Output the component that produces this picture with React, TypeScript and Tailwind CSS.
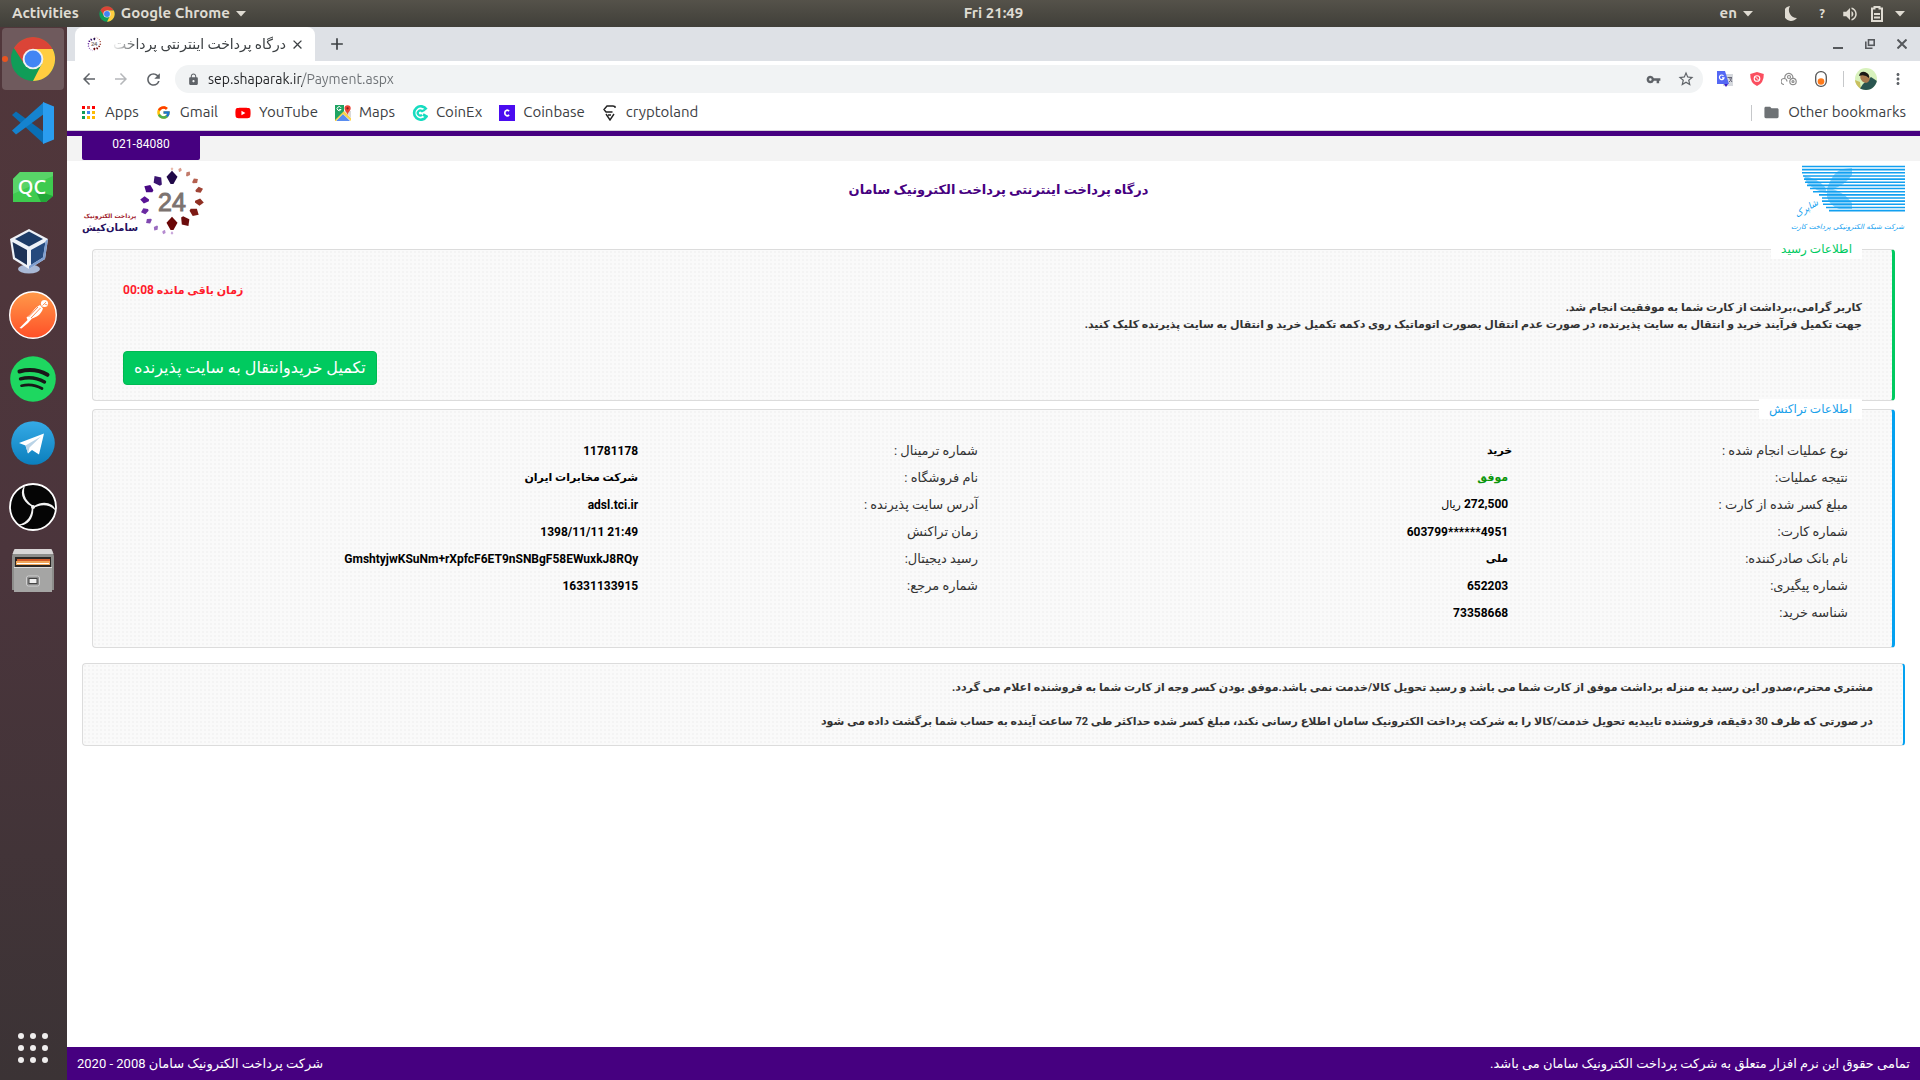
import React from "react";
import { MdStarBorder, MdVpnKey, MdLock, MdRefresh, MdArrowBack, MdArrowForward, MdClose, MdAdd, MdFolder, MdMoreVert, MdVolumeUp } from "react-icons/md";
import { FcGoogle } from "react-icons/fc";
import { FaYoutube } from "react-icons/fa";

const UI = "font-['Ubuntu','Noto_Sans','DejaVu_Sans',sans-serif]";

function ChromeLogo({ size }: { size: number }) {
  return (
    <svg width={size} height={size} viewBox="0 0 48 48" aria-hidden="true">
      <circle cx="24" cy="24" r="23" fill="#109d58" />
      <path d="M24 24 L4.1 12.5 A23 23 0 0 1 43.9 12.5 L44 13.5 H24 Z" fill="#db4437" />
      <path d="M24 13.5 H44.5 A23 23 0 0 1 24 47 L33.1 29.2 Z" fill="#ffcd40" />
      <path d="M4.1 12.5 L14.9 29.2 L24 24 V13.5 Z" fill="#db4437" />
      <circle cx="24" cy="24" r="10.8" fill="#f1f1f1" />
      <circle cx="24" cy="24" r="8.8" fill="#4285f4" />
    </svg>
  );
}

function VsCodeLogo() {
  return (
    <svg width="44" height="44" viewBox="0 0 44 44" aria-hidden="true">
      <path d="M1 14 L5 10.5 L33 31 V43 Z" fill="#0a6fb5" />
      <path d="M1 29.5 L5 33.5 L33 13 V1 Z" fill="#1583cf" />
      <path d="M32 1 L43 5.5 V38.500 L32 43 Z" fill="#2a9df0" />
    </svg>
  );
}

function QtCreatorLogo() {
  return (
    <svg width="40" height="30" viewBox="0 0 40 30" aria-hidden="true">
      <path d="M7 0 H40 V24 L33 30 H0 V7 Z" fill="#3ecb4f" />
      <path d="M7 0 H40 V4 L0 22 V7 Z" fill="#58d468" />
      <path d="M22 18 L40 24 L33 30 H28 Z" fill="#22a838" />
      <text x="19" y="22" textAnchor="middle" fontFamily="'Noto Sans', sans-serif" fontSize="20" fontWeight="500" fill="#fff">QC</text>
    </svg>
  );
}

function VirtualBoxLogo() {
  return (
    <svg className="mr-2" width="40" height="46" viewBox="0 0 40 46" aria-hidden="true">
      <ellipse cx="20" cy="41" rx="11" ry="4.500" fill="#a9b9d6" />
      <path d="M20 1 L39 11 L36 31 L20 41 L4 31 L1 11 Z" fill="#eef2f8" />
      <path d="M20 3.500 L34 11 L20 18.500 L6 11 Z" fill="#1d3c68" />
      <path d="M3.500 14 L18 22 V37 L6 29.500 Z" fill="#1b3157" />
      <path d="M36.500 14 L22 22 V37 L34 29.500 Z" fill="#254a7e" />
      <path d="M39 11 L36 31 L20 41 V38 L34 29.500 L36.500 13 Z" fill="#7f9fd0" />
    </svg>
  );
}

function PostmanLogo() {
  return (
    <svg width="48" height="48" viewBox="0 0 48 48" aria-hidden="true">
      <defs>
        <linearGradient id="postman" x1="0" y1="0" x2="0" y2="1">
          <stop offset="0" stopColor="#ff9a4a" />
          <stop offset="1" stopColor="#ff4f27" />
        </linearGradient>
      </defs>
      <circle cx="24" cy="24" r="23.300" fill="url(#postman)" stroke="#fff" strokeWidth="1.400" />
      <circle cx="35.500" cy="12.500" r="3.600" fill="#fff" />
      <path d="M31 14 L34 17.500 C32 24 27 26 23 27.500 L19 32 L12.500 37.500 L10.500 37 L18.500 29 L17.500 26.500 C22 24 25 17 31 14 Z" fill="#fff" />
      <path d="M29 16 L19.500 26 M31.500 17 L22 27" stroke="#ff7a3c" strokeWidth="0.900" />
      <path d="M33.500 14.500 L37 11 M35.500 13 L38.500 14" stroke="#ff8f50" strokeWidth="0.900" />
    </svg>
  );
}

function SpotifyLogo() {
  return (
    <svg width="46" height="46" viewBox="0 0 46 46" aria-hidden="true">
      <circle cx="23" cy="23" r="22.800" fill="#1ed760" />
      <g fill="none" stroke="#181818" strokeLinecap="round">
        <path d="M9.500 15.500 C19 13 29 14 37.500 18.800" strokeWidth="4" />
        <path d="M10.500 22.800 C19 20.600 27 21.600 34.500 26" strokeWidth="3.400" />
        <path d="M11.500 29.700 C18.500 28 25.500 28.700 32 32.500" strokeWidth="2.700" />
      </g>
    </svg>
  );
}

function TelegramLogo() {
  return (
    <svg width="44" height="44" viewBox="0 0 44 44" aria-hidden="true">
      <defs>
        <linearGradient id="telegram" x1="0" y1="0" x2="0" y2="1">
          <stop offset="0" stopColor="#35aae6" />
          <stop offset="1" stopColor="#0b7fbd" />
        </linearGradient>
      </defs>
      <circle cx="22" cy="22" r="21.800" fill="url(#telegram)" />
      <path d="M33 12.500 L8 22 L14.500 24.500 L17 32.500 L21 29 L28 33.500 Z" fill="#fff" />
      <path d="M14.500 24.500 L30 15.500 L18.500 26.500 L17 32.500 Z" fill="#b9d3e6" />
    </svg>
  );
}

function ObsLogo() {
  const arm = "M-8 -21.5 C-13.500 -17 -12 -6 -1.500 -0.500 L1.500 -0.500 C-5 -4 -11.500 -11 -8 -21.5 Z";
  return (
    <svg width="48" height="48" viewBox="-24 -24 48 48" aria-hidden="true">
      <circle r="23" fill="#050505" stroke="#fff" strokeWidth="1.800" />
      <g fill="#f4f4f4">
        <circle r="2" />
        <path d={arm} />
        <path d={arm} transform="rotate(120)" />
        <path d={arm} transform="rotate(240)" />
      </g>
    </svg>
  );
}

function FilesLogo() {
  return (
    <svg width="42" height="44" viewBox="0 0 42 44" aria-hidden="true">
      <path d="M2 1 H40 L42 7 V41 H0 V7 Z" fill="#8d8d8b" />
      <path d="M2.500 0 H39.500 L41.500 5 H0.500 Z" fill="#d8d5d6" />
      <rect x="3" y="8" width="36" height="12" fill="#2b2624" />
      <rect x="5" y="10" width="33" height="3" fill="#cf5b2b" />
      <rect x="4" y="12" width="34" height="4" fill="#f0a65a" />
      <rect x="5" y="14" width="32" height="1" fill="#fff" />
      <path d="M2 18 H40 V43 H2 Z" fill="#a5a5a4" />
      <path d="M2 18 H40 V19 H2 Z" fill="#dedede" />
      <rect x="14.500" y="27" width="13" height="10" rx="2" fill="#8c8c8c" stroke="#d0d0d0" />
      <rect x="17" y="29.500" width="8" height="5" fill="#eee" stroke="#444" />
    </svg>
  );
}

const dock = [
  { name: "Visual Studio Code", icon: <VsCodeLogo /> },
  { name: "Qt Creator", icon: <QtCreatorLogo /> },
  { name: "VirtualBox", icon: <VirtualBoxLogo /> },
  { name: "Postman", icon: <PostmanLogo /> },
  { name: "Spotify", icon: <SpotifyLogo /> },
  { name: "Telegram", icon: <TelegramLogo /> },
  { name: "OBS Studio", icon: <ObsLogo /> },
  { name: "Files", icon: <FilesLogo /> },
];

function Caret() {
  return (
    <svg width="10" height="6" viewBox="0 0 10 6" aria-hidden="true">
      <path d="M0 0 H10 L5 5.500 Z" fill="currentColor" />
    </svg>
  );
}

function SystemBar() {
  return (
    <header className={`${UI} grid h-[27px] shrink-0 grid-cols-[1fr_auto_1fr] items-center bg-linear-to-b from-[#55524a] to-[#403f39] pl-[67px] text-[15px] font-bold text-[#dfdbd2]`}>
      <div className="-ml-[55px] flex items-center gap-5">
        <button>Activities</button>
        <button className="flex items-center gap-1.5">
          <ChromeLogo size={16} />
          <span>Google Chrome</span>
          <Caret />
        </button>
      </div>
      <time>Fri 21:49</time>
      <div className="flex items-center justify-end pr-[15px]">
        <button className="mr-8 flex items-center gap-1.5">en <Caret /></button>
        <svg className="mr-5" width="12" height="15" viewBox="0 0 12 15" aria-label="Night light">
          <path d="M5 0 A7.500 7.500 0 1 0 12 12 A8 8 0 0 1 5 0 Z" fill="currentColor" />
        </svg>
        <span className="mr-3.5 w-2.5 text-center text-[13px]">?</span>
        <MdVolumeUp className="mr-3" size={18} aria-label="Volume" />
        <svg className="mr-3" width="12" height="16" viewBox="0 0 12 16" aria-label="Battery">
          <path d="M1 2.500 H3.500 V1 H8.500 V2.500 H11 V15 H1 Z" fill="none" stroke="currentColor" strokeWidth="2" />
          <path d="M3 8 H9 M3 11.500 H9" stroke="currentColor" strokeWidth="2" />
        </svg>
        <Caret />
      </div>
    </header>
  );
}

function Dock() {
  return (
    <nav aria-label="Dock" className="flex w-[67px] shrink-0 flex-col bg-linear-to-b from-[#51373b] via-[#4b353c] to-[#3b3335]">
      <button aria-label="Google Chrome" className="relative mx-0.5 my-px flex h-[62px] w-[62px] items-center justify-center rounded-sm bg-[#6f5a5d]">
        <span className="absolute left-0 h-1.5 w-1.5 rounded-full bg-[#e95420]" />
        <ChromeLogo size={46} />
      </button>
      {dock.map((d) => (
        <button key={d.name} aria-label={d.name} className="mr-px flex h-16 items-center justify-center">
          {d.icon}
        </button>
      ))}
      <button aria-label="Show Applications" className="mt-auto mr-px flex h-16 items-center justify-center">
        <span className="grid grid-cols-3 gap-1.5">
          {Array.from({ length: 9 }, (_, i) => (
            <span key={i} className="h-1.5 w-1.5 rounded-full bg-[#f0eeee]" />
          ))}
        </span>
      </button>
    </nav>
  );
}

const kites: [number, number, number, string, number][] = [
  [35, 5, 3, "#e8b8a8", 0], [43, 6, 4, "#d99a8a", 18], [51, 10, 5, "#c27a6a", 36], [58, 17, 6, "#b5604f", 54],
  [62, 26, 7, "#a04436", 72], [62, 38, 8, "#8f2f22", 95], [57, 48, 9, "#7d1a14", 120], [48, 57, 10, "#6c0c0c", 145],
  [35, 60, 12, "#6a0606", 0], [35, 69, 3, "#c8a4da", 180], [27, 68, 4, "#b58bd0", 198], [19, 64, 5, "#9a6bc0", 216],
  [12, 57, 6, "#8048b0", 234], [8, 47, 7, "#6a2aa2", 252], [8, 36, 8, "#5a1496", 276], [12, 25, 9, "#480884", 300],
  [21, 17, 10, "#3a1470", 325], [35, 14, 12, "#200848", 0],
];

function KiteRing({ size }: { size: number }) {
  return (
    <svg className="shrink-0" width={size} height={size} viewBox="1 0 74 74" aria-hidden="true">
      {kites.map(([x, y, s, c, a]) => (
        <path key={`${x}-${y}`} d="M0 -0.6 L0.46 -0.1 L0.12 0.5 H-0.12 L-0.46 -0.1 Z" fill={c} transform={`translate(${x} ${y}) rotate(${a}) scale(${s})`} />
      ))}
      <text x="35" y="47" textAnchor="middle" fontFamily="'Liberation Sans', sans-serif" fontSize="25" fill="#7c7370" stroke="#7c7370">24</text>
    </svg>
  );
}

function ShaparakLogo() {
  const rows = [0, 0, 0, 1, 2, 3, 5, 8, 11, 17, 20, 20, 21, 24, 27];
  return (
    <svg width="118" height="74" viewBox="-6 0 118 74" role="img" aria-label="شاپرک">
      <path d="M11 11 Q24 13 32 22 L34 28 Q22 26 14 18 Z M34 24 Q40 6 50 4 L59 3 V10 Q52 20 40 24 Q52 28 59 38 V44 H46 Q36 40 34 32 Z" fill="#3fb2f5" opacity="0.6" />
      {rows.map((x, i) => (
        <path key={i} d={`M${9 + x} ${1.5 + i * 3.150} H112`} stroke="#12a0f0" strokeWidth="1.600" />
      ))}
      <text x="15" y="46" direction="rtl" fontFamily="'DejaVu Sans', sans-serif" fontSize="9" fontStyle="italic" fill="#12a0f0" textAnchor="middle" transform="rotate(-32 15 46)">شاپرک</text>
      <text x="111" y="64" direction="rtl" fontFamily="'DejaVu Sans', sans-serif" fontSize="7" fontStyle="italic" fill="#12a0f0">شرکت شبکه الکترونیکی پرداخت کارت</text>
    </svg>
  );
}

function AppsIcon() {
  const colors = ["#ff0000", "#ea4335", "#ff0000", "#0f9d58", "#4285f4", "#fbbc05", "#0f9d58", "#fbbc05", "#ffb900"];
  return (
    <svg width="16" height="16" viewBox="0 0 16 16" aria-hidden="true">
      {colors.map((c, i) => (
        <rect key={i} x={1 + (i % 3) * 5} y={1 + Math.floor(i / 3) * 5} width="3" height="3" fill={c} />
      ))}
    </svg>
  );
}

function MapsIcon() {
  return (
    <svg width="16" height="16" viewBox="0 0 16 16" aria-hidden="true">
      <path d="M0 0 H9 L9 8 L0 16 Z" fill="#1fa463" />
      <path d="M1 16 L8 9 L15 16 Z" fill="#5a8df0" />
      <path d="M0 15 L9 6 L16 13 V16 L8 9 L1 16 H0 Z" fill="#fdd44b" />
      <path d="M9 6 L16 6 V13 Z" fill="#d9d9d9" />
      <path d="M12.500 10 C12 7 9.500 6 9.500 3.300 A3 3 0 0 1 15.700 3.300 C15.700 6 13 7 12.500 10 Z" fill="#ea4335" />
      <circle cx="12.600" cy="3.300" r="1.100" fill="#7b231e" />
      <path d="M6 2.800 A2 2 0 1 0 6 4.500 H4.200" fill="none" stroke="#fff" />
    </svg>
  );
}

function CoinExIcon() {
  return (
    <svg width="16" height="16" viewBox="0 0 16 16" aria-hidden="true" fill="none" stroke="#16dcc0" strokeWidth="2.600">
      <path d="M14.500 4.500 A6.700 6.700 0 1 0 14.500 11.500 L11 9.500" />
      <path d="M13 4.800 L10 6.200 A2.500 2.500 0 1 0 10 9.800" strokeWidth="2.200" />
    </svg>
  );
}

function CoinbaseIcon() {
  return (
    <svg width="16" height="16" viewBox="0 0 16 16" aria-hidden="true">
      <rect width="16" height="16" fill="#4a0cf0" />
      <path d="M10 6.300 C9 4.600 5.800 4.800 5.800 8 C5.800 11.200 9 11.400 10 9.700" fill="none" stroke="#fff" strokeWidth="1.700" />
    </svg>
  );
}

function CryptolandIcon() {
  return (
    <svg width="16" height="16" viewBox="0 0 16 16" aria-hidden="true" fill="none" stroke="#222" strokeWidth="1.400">
      <path d="M13 3 V1.500 L11 1 H5 L2 4.500 L4 7 H10.500" />
      <path d="M4 9 L8 15 L12 9 M6 10 H9" />
    </svg>
  );
}

const bookmarks = [
  { label: "Apps", icon: <AppsIcon /> },
  { label: "Gmail", icon: <FcGoogle size={15} /> },
  { label: "YouTube", icon: <FaYoutube size={16} color="#f00" /> },
  { label: "Maps", icon: <MapsIcon /> },
  { label: "CoinEx", icon: <CoinExIcon /> },
  { label: "Coinbase", icon: <CoinbaseIcon /> },
  { label: "cryptoland", icon: <CryptolandIcon /> },
];

function BrowserChrome() {
  return (
    <div className={`${UI} shrink-0 border-b border-[#d5d5d8] bg-white text-[#3c4043]`}>
      <div className="flex h-[34px] items-center bg-[#dee1e6]">
        <div className="ml-2 flex h-[34px] w-60 items-center rounded-t-lg bg-white pr-2.5 pl-3">
          <KiteRing size={16} />
          <span dir="rtl" className="ml-2 flex-1 overflow-hidden mask-[linear-gradient(to_right,transparent,black_28px)] text-sm whitespace-nowrap">
            درگاه پرداخت اینترنتی پرداخت الکترونیک سامان
          </span>
          <button aria-label="Close tab" className="ml-1"><MdClose size={15} /></button>
        </div>
        <button aria-label="New tab" className="ml-3"><MdAdd size={20} /></button>
        <div className="ml-auto flex items-center gap-[22px] pr-[13px] text-[#55585c]">
          <button aria-label="Minimize"><svg width="10" height="10" viewBox="0 0 10 10"><path d="M0 9 H10" stroke="currentColor" strokeWidth="2" /></svg></button>
          <button aria-label="Restore">
            <svg width="10" height="10" viewBox="0 0 10 10" fill="none" stroke="currentColor" strokeWidth="1.600">
              <rect x="3.500" y="0.800" width="5.700" height="5.500" />
              <path d="M0.800 2.500 V9.200 H7.500" />
            </svg>
          </button>
          <button aria-label="Close"><svg width="10" height="10" viewBox="0 0 10 10"><path d="M0.500 0.500 L9.500 9.500 M9.500 0.500 L0.500 9.500" stroke="currentColor" strokeWidth="2" /></svg></button>
        </div>
      </div>
      <div className="flex h-9 items-center pr-4 pl-[13px] text-[#5f6368]">
        <button aria-label="Back"><MdArrowBack size={18} /></button>
        <button aria-label="Forward" className="ml-3.5 text-[#b5b7ba]"><MdArrowForward size={18} /></button>
        <button aria-label="Reload" className="ml-3.5"><MdRefresh size={19} /></button>
        <div className="ml-3 flex h-7 flex-1 items-center rounded-full bg-[#f1f3f4] pr-2 pl-3">
          <MdLock size={13} />
          <input
            aria-label="Address"
            type="text"
            defaultValue="sep.shaparak.ir/Payment.aspx"
            className="ml-2 min-w-0 flex-1 bg-[linear-gradient(90deg,#202124_94px,#6b6f73_94px)] bg-clip-text text-sm text-transparent outline-none"
          />
          <MdVpnKey size={15} aria-label="Saved password" />
          <button aria-label="Bookmark this page" className="ml-4"><MdStarBorder size={18} /></button>
        </div>
        <div className="ml-3.5 flex items-center gap-4">
          <svg width="16" height="16" viewBox="0 0 16 16" aria-label="Translate">
            <rect x="6" y="3" width="10" height="12" fill="#d5d8dd" />
            <path d="M0 0 H8 L12 13 H0 Z" fill="#5468f4" />
            <path d="M7 13 H11 L9 16 Z" fill="#3a1fc8" />
            <path d="M6.500 4.800 A2.300 2.300 0 1 0 7 6.800 H5" fill="none" stroke="#fff" strokeWidth="1.200" />
            <path d="M10.500 6.500 H15 M12.500 6 Q13 9 15 11 M14.500 7 Q14 10 12 11" stroke="#667" fill="none" />
          </svg>
          <svg width="16" height="16" viewBox="0 0 16 16" aria-label="Ad blocker">
            <path d="M8 1 L14.800 3 Q15 12 8 15 Q1 12 1.200 3 Z" fill="#fb4e5f" />
            <circle cx="8" cy="7.500" r="2.800" fill="none" stroke="#fff" strokeWidth="1.100" />
            <path d="M6 5.500 L10 9.500" stroke="#fff" />
          </svg>
          <svg width="16" height="16" viewBox="0 0 16 16" aria-label="Extension" fill="none" stroke="#8d8d8d" strokeWidth="1.200">
            <path d="M3 13.500 A3 3 0 1 1 6 10.500 M4 7.500 A4 4 0 1 1 11.500 8" />
            <circle cx="12" cy="10.500" r="3.200" />
            <circle cx="8" cy="6" r="1.500" />
            <circle cx="12" cy="10.500" r="1" />
          </svg>
          <svg width="16" height="16" viewBox="0 0 16 16" aria-label="Extension">
            <rect x="2.700" y="0.700" width="10.600" height="14.600" rx="5" fill="#fff" stroke="#555" strokeWidth="1.300" />
            <circle cx="8" cy="10.500" r="3.300" fill="#ff7a1a" />
          </svg>
        </div>
        <span className="ml-3.5 h-4 w-px bg-[#c6c8ca]" />
        <button aria-label="Profile" className="ml-[11px]">
          <svg width="22" height="22" viewBox="0 0 22 22">
            <clipPath id="avatar"><circle cx="11" cy="11" r="11" /></clipPath>
            <g clipPath="url(#avatar)">
              <rect width="22" height="22" fill="#d8f2bd" />
              <path d="M0 12 L5 14 L6 22 H0 Z" fill="#c9c060" />
              <path d="M4 22 L8 16 L16 9 L22 13 V22 Z" fill="#2a5550" />
              <ellipse cx="10" cy="9.500" rx="4.500" ry="5.500" fill="#a97a4e" transform="rotate(-30 10 9.500)" />
              <path d="M4 8 Q5 3 10 4 Q15 6 14 10 Q10 6 4 8 Z" fill="#1b1a17" />
            </g>
          </svg>
        </button>
        <button aria-label="Menu" className="-mr-[3px] ml-3"><MdMoreVert size={18} /></button>
      </div>
      <nav aria-label="Bookmarks" className="flex h-[33px] items-center pr-3.5 pb-0.5 pl-3.5 text-[15px]">
        <ul className="flex gap-[17px]">
          {bookmarks.map((b) => (
            <li key={b.label}>
              <a href="#" className="flex items-center gap-2">
                <span className="flex w-4 justify-center">{b.icon}</span>
                {b.label}
              </a>
            </li>
          ))}
        </ul>
        <a href="#" className="ml-auto flex h-4 items-center gap-2 border-l border-[#c6c8ca] pl-[11px]">
          <MdFolder size={17} color="#6e7275" />
          Other bookmarks
        </a>
      </nav>
    </div>
  );
}

const DOTS = "bg-[#fafafa] bg-[radial-gradient(#f4f4f4_1px,transparent_1px)] bg-[size:4px_4px]";

type Cell = [string, React.ReactNode];
const rows: [Cell, Cell | null][] = [
  [["نوع عملیات انجام شده :", <span className="text-[11px]">خرید</span>], ["شماره ترمینال :", "11781178"]],
  [["نتیجه عملیات:", <span className="text-[11px] text-[#0a960a]">موفق</span>], ["نام فروشگاه :", <span className="text-[11px]">شرکت مخابرات ایران</span>]],
  [["مبلغ کسر شده از کارت :", <>272,500 <span className="text-[11px] font-normal">ریال</span></>], ["آدرس سایت پذیرنده :", "adsl.tci.ir"]],
  [["شماره کارت:", <bdi dir="ltr">603799******4951</bdi>], ["زمان تراکنش", <bdi dir="ltr">1398/11/11 21:49</bdi>]],
  [["نام بانک صادرکننده:", <span className="text-[11px]">ملی</span>], ["رسید دیجیتال:", <bdi dir="ltr">GmshtyjwKSuNm+rXpfcF6ET9nSNBgF58EWuxkJ8RQy</bdi>]],
  [["شماره پیگیری:", "652203"], ["شماره مرجع:", "16331133915"]],
  [["شناسه خرید:", "73358668"], null],
];

function ReceiptPage() {
  return (
    <div dir="rtl" className="flex flex-1 flex-col bg-white font-['Roboto','DejaVu_Sans',sans-serif] text-xs text-[#333]">
      <div className="h-[30px] border-t-[5px] border-[#460080] bg-[#f3f3f3] px-[15px]">
        <a href="tel:02184080" dir="ltr" className="mr-auto flex h-6 w-[118px] justify-center rounded-b-xs bg-[#460080] text-xs leading-4 text-white">021-84080</a>
      </div>
      <header className="flex h-[84px] items-start justify-between px-[15px]">
        <div className="w-[118px] pt-1">
          <ShaparakLogo />
        </div>
        <h1 className="pt-[19px] text-[13px] leading-5 font-bold text-[#460080]">درگاه پرداخت اینترنتی پرداخت الکترونیک سامان</h1>
        <div className="flex w-32 items-end justify-end pt-[3px]">
          <KiteRing size={74} />
          <div className="mb-1 text-center font-['DejaVu_Sans',sans-serif] font-bold whitespace-nowrap">
            <p className="text-[6px] leading-3 text-[#a01828]">پرداخت الکترونیک</p>
            <p className="text-[10px] leading-3 text-[#241060]">سامان‌کیش</p>
          </div>
        </div>
      </header>
      <main className="flex-1 px-[15px]">
        <fieldset className={`${DOTS} mx-2.5 -mt-1.5 rounded border border-r-[3px] border-[#dcdcdc] border-r-[#00ca5f] px-[30px] pb-[15px]`}>
          <legend className="bg-white px-2.5 leading-5 text-[#00ca5f]">اطلاعات رسید</legend>
          <div className="flex items-start justify-between pt-5">
            <p className="pt-5 text-[11px] leading-[17px] font-bold">
              کاربر گرامی،برداشت از کارت شما به موفقیت انجام شد.
              <br />
              جهت تکمیل فرآیند خرید و انتقال به سایت پذیرنده، در صورت عدم انتقال بصورت اتوماتیک روی دکمه تکمیل خرید و انتقال به سایت پذیرنده کلیک کنید.
            </p>
            <div className="flex flex-col items-end">
              <p className="text-[11px] leading-6 font-bold text-[#ff1c2c]">زمان باقی مانده <span className="text-xs">00:08</span></p>
              <button className="mt-12 h-[34px] rounded border border-[#00ba52] bg-[#00ca5f] px-2.5 text-base leading-4 text-white">تکمیل خریدوانتقال به سایت پذیرنده</button>
            </div>
          </div>
        </fieldset>
        <fieldset className={`${DOTS} mx-2.5 -mt-0.5 rounded border border-r-[3px] border-[#dcdcdc] border-r-[#03a1f0] pr-[30px] pb-[21px] pl-[15px]`}>
          <legend className="bg-white px-2.5 leading-5 text-[#1ba1ea]">اطلاعات تراکنش</legend>
          <div className="pt-[18px] pr-3.5">
            <table className="w-full table-fixed text-right">
              <colgroup>
                <col className="w-[19.3%]" />
                <col className="w-[30.7%]" />
                <col className="w-[19.3%]" />
                <col className="w-[30.7%]" />
              </colgroup>
              <tbody>
                {rows.map(([a, b], i) => (
                  <tr key={i} className="h-[27px] whitespace-nowrap">
                    <th scope="row" className="text-[13px] leading-5 font-normal">{a[0]}</th>
                    <td className={i === 0 ? "leading-5 font-bold text-black" : "pr-1 leading-5 font-bold text-black"}>{a[1]}</td>
                    {b && <th scope="row" className="text-[13px] leading-5 font-normal">{b[0]}</th>}
                    {b && <td className="pr-1 leading-5 font-bold text-black">{b[1]}</td>}
                  </tr>
                ))}
              </tbody>
            </table>
          </div>
        </fieldset>
        <section className={`${DOTS} mt-[15px] rounded border border-r-2 border-[#dcdcdc] border-r-[#03a1f0] px-[30px] py-[15px] text-[11px] font-bold`}>
          <p className="leading-[17px]">مشتری محترم،صدور این رسید به منزله برداشت موفق از کارت شما می باشد و رسید تحویل کالا/خدمت نمی باشد.موفق بودن کسر وجه از کارت شما به فروشنده اعلام می گردد.</p>
          <p className="mt-[17px] leading-[17px]">در صورتی که ظرف 30 دقیقه، فروشنده تاییدیه تحویل خدمت/کالا را به شرکت پرداخت الکترونیک سامان اطلاع رسانی نکند، مبلغ کسر شده حداکثر طی 72 ساعت آینده به حساب شما برگشت داده می شود</p>
        </section>
      </main>
      <footer className="flex h-[33px] items-center justify-between bg-[#460080] px-2.5 text-[13px] text-white">
        <p>تمامی حقوق این نرم افزار متعلق به شرکت پرداخت الکترونیک سامان می باشد.</p>
        <p>شرکت پرداخت الکترونیک سامان 2008 - 2020</p>
      </footer>
    </div>
  );
}

export default function App() {
  return (
    <div className="flex min-h-screen flex-col">
      <SystemBar />
      <div className="flex flex-1">
        <Dock />
        <div className="flex min-w-0 flex-1 flex-col">
          <BrowserChrome />
          <ReceiptPage />
        </div>
      </div>
    </div>
  );
}
